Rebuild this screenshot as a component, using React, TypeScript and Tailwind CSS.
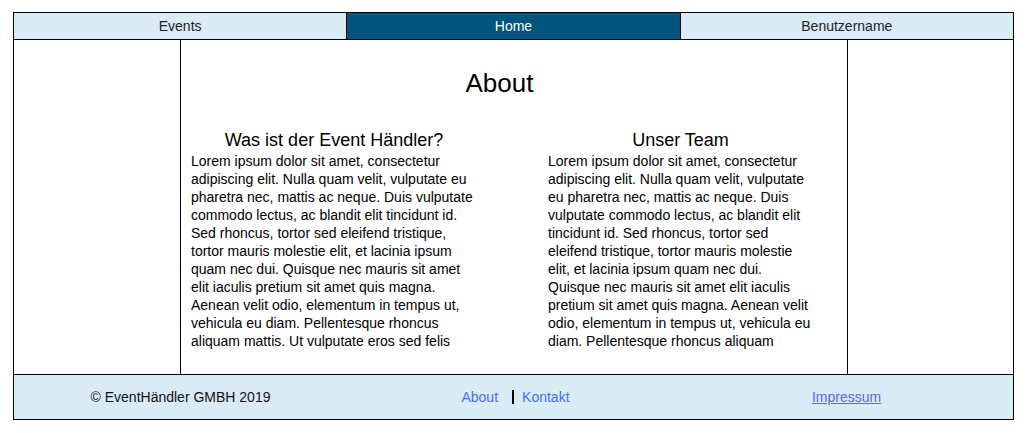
import React from "react";

const lorem =
  "Lorem ipsum dolor sit amet, consectetur adipiscing elit. Nulla quam velit, vulputate eu pharetra nec, mattis ac neque. Duis vulputate commodo lectus, ac blandit elit tincidunt id. Sed rhoncus, tortor sed eleifend tristique, tortor mauris molestie elit, et lacinia ipsum quam nec dui. Quisque nec mauris sit amet elit iaculis pretium sit amet quis magna. Aenean velit odio, elementum in tempus ut, vehicula eu diam. Pellentesque rhoncus aliquam mattis. Ut vulputate eros sed felis sodales nec vulputate justo hendrerit.";

const navItems = [
  { title: "Events", active: false },
  { title: "Home", active: true },
  { title: "Benutzername", active: false },
];

function Section({ title, width }: { title: string; width: string }) {
  return (
    <div className={width}>
      <h2 className="text-center text-[18px] leading-[22px] text-black">{title}</h2>
      <p className="mt-[1px] h-[198px] overflow-hidden text-[14px] leading-[18px] text-black">
        {lorem}
      </p>
    </div>
  );
}

export default function App() {
  return (
    <div
      className="min-h-screen bg-white pl-[13px] pt-[12px]"
      style={{ fontFamily: '"Liberation Sans", Arial, sans-serif' }}
    >
      <div className="w-[1001px] border border-black">
        <nav className="flex h-[27px] border-b border-black text-[14px]">
          {navItems.map((item, index) => (
            <a
              key={item.title}
              href="#"
              className={`flex flex-1 items-center justify-center ${
                index > 0 ? "border-l border-black" : ""
              } ${item.active ? "bg-[#00557f] text-white" : "bg-[#d9ecf5] text-[#222]"}`}
            >
              {item.title}
            </a>
          ))}
        </nav>

        <main className="flex h-[334px]">
          <div className="w-[167px] border-r border-black" />
          <div className="flex-1 pt-[28px]">
            <h1 className="pr-[29px] text-center text-[26px] leading-[30px] text-black">About</h1>
            <div className="mt-[31px] flex pl-[10px]">
              <Section title="Was ist der Event Händler?" width="w-[286px]" />
              <div className="ml-[71px]">
                <Section title="Unser Team" width="w-[265px]" />
              </div>
            </div>
          </div>
          <div className="w-[166px] border-l border-black" />
        </main>

        <footer className="grid h-[45px] grid-cols-3 items-center border-t border-black bg-[#d9ecf5] text-[14px]">
          <div className="text-center text-[#111]">© EventHändler GMBH 2019</div>
          <div className="flex items-center justify-center pl-[4px]">
            <a href="#" className="text-[#4b6ef5]">
              About
            </a>
            <span className="ml-[14px] h-[14px] w-[2px] bg-black" />
            <a href="#" className="ml-[8px] text-[#4b6ef5]">
              Kontakt
            </a>
          </div>
          <div className="text-center">
            <a href="#" className="text-[#6264e6] underline">
              Impressum
            </a>
          </div>
        </footer>
      </div>
    </div>
  );
}
